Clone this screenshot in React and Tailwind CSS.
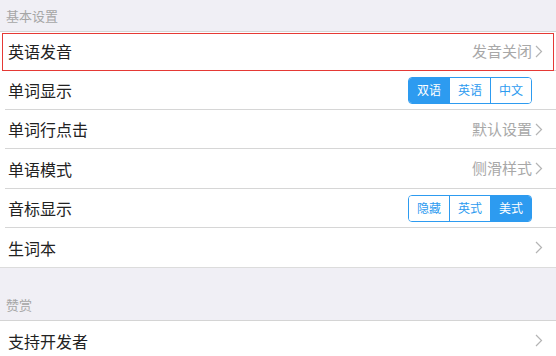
import React from "react";

const font = { fontFamily: '"Noto Sans CJK SC", "Noto Sans", sans-serif' };

const Chevron = () => (
  <svg width="8" height="13" viewBox="0 0 8 13" className="ml-[3px]">
    <path d="M1 1l5.5 5.5L1 12" fill="none" stroke="#b4b4b4" strokeWidth="1.2" />
  </svg>
);

const Segmented = ({ items, active }) => (
  <div className="flex h-[27px] w-[124px] rounded-[4px] border border-[#2d9bf0] overflow-hidden">
    {items.map((label, i) => (
      <div
        key={i}
        className={
          "flex-1 flex items-center justify-center text-[12px] " +
          (i > 0 ? "border-l border-[#2d9bf0] " : "") +
          (i === active ? "bg-[#2d9bf0] text-white" : "bg-white text-[#2d9bf0]")
        }
      >
        {label}
      </div>
    ))}
  </div>
);

const Row = ({ label, value, chevron, children, last, highlight, tall }) => (
  <div className={"relative bg-white " + (tall ? "h-[40px]" : "h-[39px]")}>
    <div
      className={
        "h-full flex items-center pr-[13px] " +
        (last ? "pl-[8px]" : "ml-[5px] pl-[3px] border-b border-[#d6d6d6]")
      }
    >
      <span className="text-[16px] text-[#222]">{label}</span>
      <div className="ml-auto flex items-center">
        {value && <span className="text-[15px] text-[#a8a8a8]">{value}</span>}
        {children}
        {chevron && <Chevron />}
      </div>
    </div>
    {highlight && (
      <div className="absolute left-[2px] right-[2px] top-[1px] bottom-0 border border-[#e53935] pointer-events-none" />
    )}
  </div>
);

const Header = ({ title, tall }) => (
  <div
    className={
      "bg-[#f0eff5] flex items-end pl-[6px] border-b border-[#d4d4d4] " +
      (tall ? "h-[54px] pb-[6px] border-t border-t-[#dcdcdc]" : "h-[32px] pb-[6px]")
    }
  >
    <span className="text-[13px] text-[#a6a6a6]">{title}</span>
  </div>
);

export default function App() {
  return (
    <div className="w-[556px] h-[356px] overflow-hidden bg-[#f0eff5]" style={font}>
      <Header title="基本设置" />
      <Row label="英语发音" value="发音关闭" chevron highlight />
      <Row label="单词显示">
        <div className="mr-[11px]">
          <Segmented items={["双语", "英语", "中文"]} active={0} />
        </div>
      </Row>
      <Row label="单词行点击" value="默认设置" chevron />
      <Row label="单语模式" value="侧滑样式" chevron tall />
      <Row label="音标显示">
        <div className="mr-[11px]">
          <Segmented items={["隐藏", "英式", "美式"]} active={2} />
        </div>
      </Row>
      <Row label="生词本" chevron last />
      <Header title="赞赏" tall />
      <Row label="支持开发者" chevron last />
    </div>
  );
}
